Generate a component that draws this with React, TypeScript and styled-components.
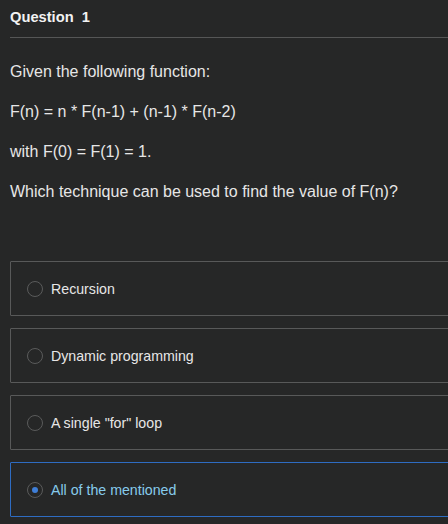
import React, { useState } from "react";
import styled, { createGlobalStyle } from "styled-components";

const Global = createGlobalStyle`
  html, body { margin: 0; padding: 0; background: #262727; }
  body { font-family: "Liberation Sans", Arial, sans-serif; overflow: hidden; }
`;

const Page = styled.div`
  width: 448px;
  height: 524px;
  background: #262727;
  padding-left: 10px;
  box-sizing: border-box;
  overflow: hidden;
`;

const Header = styled.div`
  padding: 7px 0 10px 0;
  font-size: 14.7px;
  line-height: 20px;
  font-weight: 700;
  color: #f2f2f2;
  word-spacing: 4px;
`;

const Divider = styled.div`
  height: 1px;
  background: #555656;
  margin-right: -10px;
`;

const Body = styled.div`
  padding-top: 24px;
  display: flex;
  flex-direction: column;
  gap: 20px;
`;

const Para = styled.p`
  margin: 0;
  font-size: 16px;
  line-height: 20px;
  color: #e6e6e6;
`;

const Options = styled.div`
  margin-top: 59px;
  margin-right: -10px;
  display: flex;
  flex-direction: column;
  gap: 12px;
`;

const Option = styled.label<{ $selected: boolean }>`
  display: flex;
  align-items: center;
  gap: 8px;
  height: 55px;
  box-sizing: border-box;
  padding-left: 16px;
  border: 1px solid ${(p) => (p.$selected ? "#2e6cc2" : "#585959")};
  border-radius: 1px;
  cursor: pointer;
  font-size: 14.2px;
  color: ${(p) => (p.$selected ? "#86cbec" : "#e6e6e6")};
`;

const Radio = styled.span<{ $selected: boolean }>`
  width: 16px;
  height: 16px;
  box-sizing: border-box;
  border-radius: 50%;
  border: 1px solid #5a5b5b;
  display: flex;
  align-items: center;
  justify-content: center;
  flex: none;
  &::after {
    content: "";
    width: 6px;
    height: 6px;
    border-radius: 50%;
    background: #3f7fd8;
    display: ${(p) => (p.$selected ? "block" : "none")};
  }
`;

const choices = ["Recursion", "Dynamic programming", 'A single "for" loop', "All of the mentioned"];

export default function App() {
  const [sel, setSel] = useState(3);
  return (
    <>
      <Global />
      <Page>
        <Header>Question 1</Header>
        <Divider />
        <Body>
          <Para>Given the following function:</Para>
          <Para>F(n) = n * F(n-1) + (n-1) * F(n-2)</Para>
          <Para>with F(0) = F(1) = 1.</Para>
          <Para>Which technique can be used to find the value of F(n)?</Para>
        </Body>
        <Options>
          {choices.map((c, i) => (
            <Option key={c} $selected={sel === i} onClick={() => setSel(i)}>
              <Radio $selected={sel === i} />
              {c}
            </Option>
          ))}
        </Options>
      </Page>
    </>
  );
}
